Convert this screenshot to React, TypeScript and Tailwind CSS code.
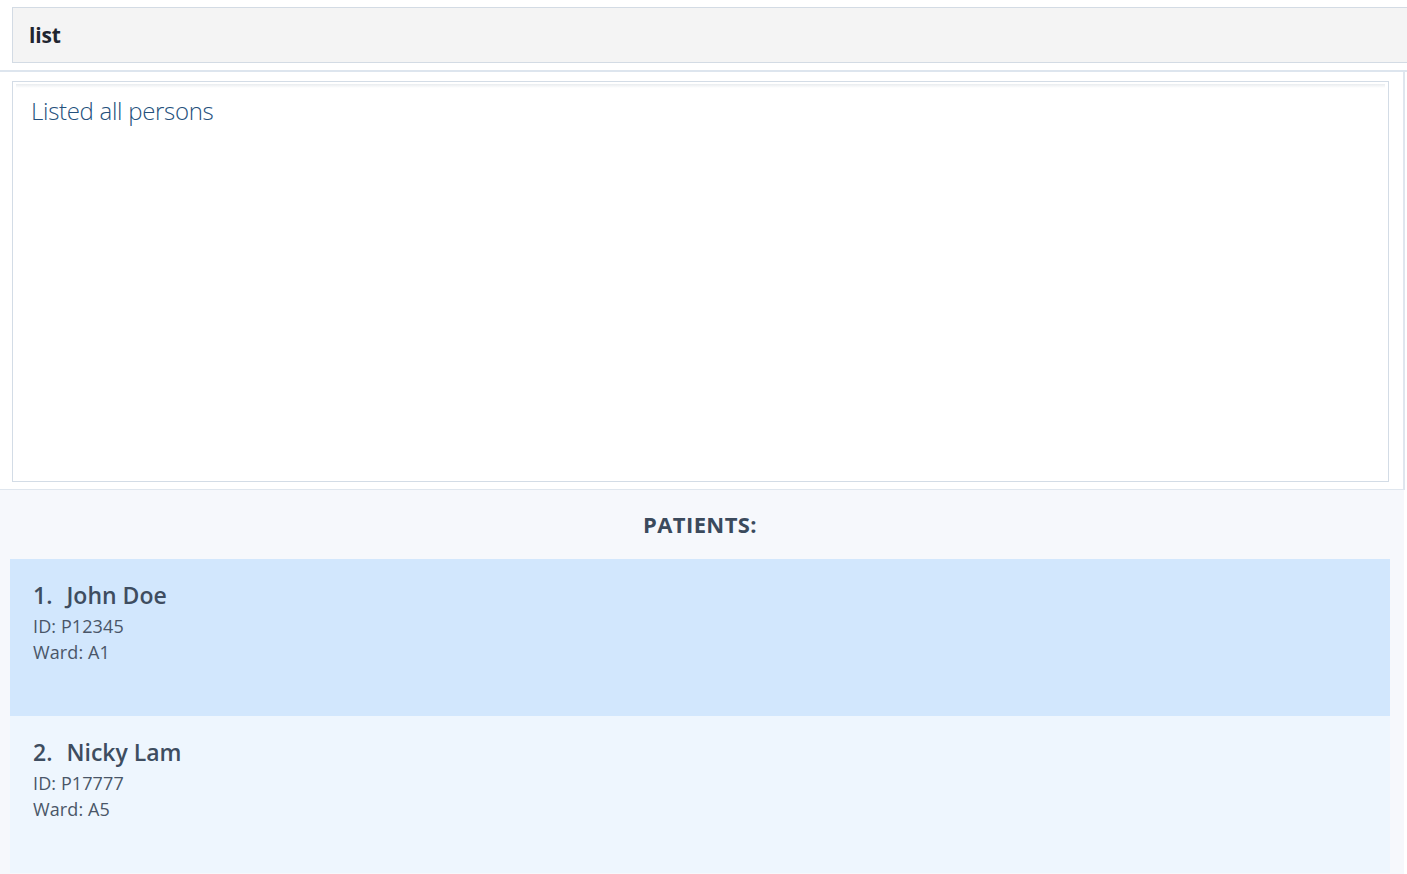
const patients = [
  { name: "John Doe", id: "P12345", ward: "A1" },
  { name: "Nicky Lam", id: "P17777", ward: "A5" },
];

const font = { fontFamily: '"Open Sans", "Noto Sans", sans-serif' };

export default function App() {
  return (
    <div className="w-[1407px] h-[874px] overflow-hidden bg-white" style={font}>
      {/* command box */}
      <div className="pt-[7px] pl-3 pr-0">
        <div className="h-[56px] -mr-[2px] border border-[#d3dbe4] bg-[#f4f4f4] flex items-center pl-4">
          <span className="text-[21px] font-bold text-[#1f2530] tracking-[-0.2px] pt-[2px]">list</span>
        </div>
      </div>

      <div className="h-[7px]" />
      <div className="h-[2px] bg-[#dde5ee]" />

      {/* result display */}
      <div className="w-[1405px] h-[418px] border-r-2 border-b border-[#dfe6ee] pt-[9px] pl-3 pr-[14px]">
        <div className="h-[401px] border border-[#d3dce6] bg-white px-[3px] pt-[2px]">
          <div className="h-[4px] bg-gradient-to-b from-[#e9ecef] to-white" />
          <div className="pl-[15px] pt-[7px] text-[24px] font-light text-[#24507c] tracking-[-0.3px] leading-[32px]">
            Listed all persons
          </div>
        </div>
      </div>

      {/* patient list */}
      <div className="w-[1404px] h-[384px] bg-[#f6f8fc]">
        <div className="h-[69px] flex items-center justify-center pr-[4px]">
          <span className="text-[22px] font-bold text-[#3b4a5c] tracking-[0.4px]">PATIENTS:</span>
        </div>
        <div className="mx-[10px] w-[1380px]">
          {patients.map((p, i) => (
            <div
              key={p.id}
              className={
                "h-[157px] pl-[23px] pt-[18px] text-[#3e4d60] " +
                (i === 0 ? "bg-[#d2e7fd]" : "bg-[#eef6fe]")
              }
            >
              <div className="text-[23px] font-semibold leading-[36px]">
                {i + 1}.<span className="ml-[14px]">{p.name}</span>
              </div>
              <div className="text-[18px] leading-[26px] text-[#4a5668] tracking-[0.1px]">ID: {p.id}</div>
              <div className="text-[18px] leading-[26px] text-[#4a5668] tracking-[0.1px]">Ward: {p.ward}</div>
            </div>
          ))}
        </div>
      </div>
    </div>
  );
}
